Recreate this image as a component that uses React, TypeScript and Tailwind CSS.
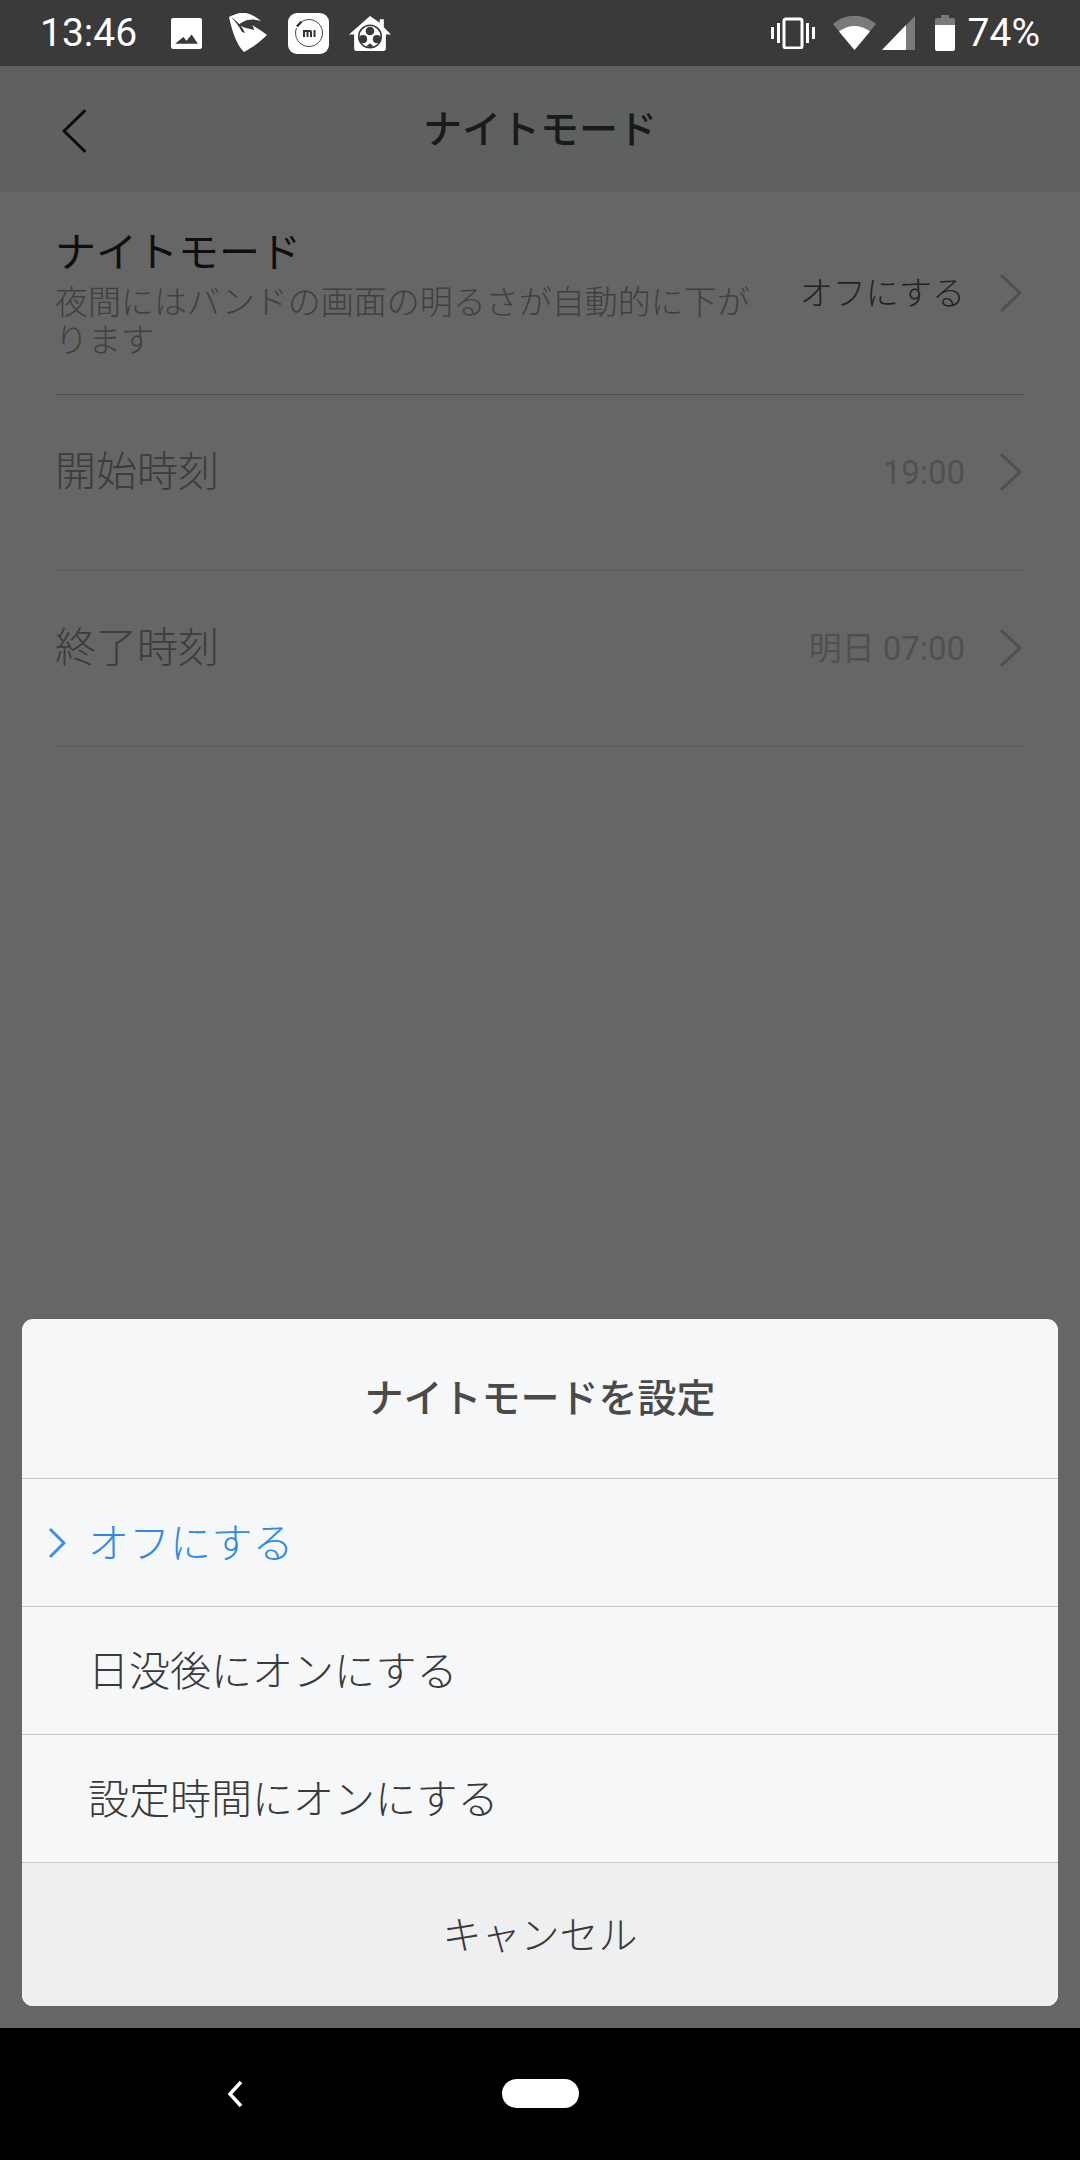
import React from "react";

const jp = "font-['Roboto','Noto_Sans_CJK_JP',sans-serif]";

function Chevron({ className }: { className: string }) {
  return (
    <svg width="22" height="38" viewBox="0 0 22 38" fill="none" className={className}>
      <path d="M2 2 L20 19 L2 36" stroke="currentColor" strokeWidth="3" strokeLinecap="round" strokeLinejoin="round" />
    </svg>
  );
}

function StatusIcons() {
  return (
    <div className="flex items-center">
      <svg width="31" height="31" viewBox="0 0 30 30" className="ml-[34px]">
        <path fillRule="evenodd" fill="#fff" d="M2 0h26a2 2 0 0 1 2 2v26a2 2 0 0 1-2 2H2a2 2 0 0 1-2-2V2a2 2 0 0 1 2-2ZM4 25h22l-6-9-5 6-3-3.500Z" />
      </svg>
      <svg width="38" height="40" viewBox="0 0 38 40" className="ml-[27px]">
        <path fill="#fff" d="M0 4C8 0 14-1 17 0 23 1 28 5 32 8 26 6 19 6 14 9 12 10 10 11 9 12 14 14 20 16 25 17 25 15 24 13 23 12 28 15 33 18 38 22 31 29 24 34 15 39 8 33 3 18 0 4Z" />
        <path fill="#3a3a3a" d="M2 4C6 8 10 13 13 19L16 20C13 13 8 8 2 4Z" />
      </svg>
      <div className="ml-[21px] flex h-[41px] w-[41px] items-center justify-center rounded-[9px] bg-white">
        <svg width="30" height="30" viewBox="0 0 30 30">
          <path d="M8 3.500A13.500 13.500 0 1 1 2.500 10" fill="none" stroke="#333" strokeWidth="0.900" />
          <path d="M3 8.500 L7.500 3.500" stroke="#333" strokeWidth="2.500" />
          <path d="M9 12h7a2 2 0 0 1 2 2v5h-2v-5h-1.500v5h-2v-5H11v5H9ZM19.500 12h2v7h-2Z" fill="#333" />
        </svg>
      </div>
      <svg width="42" height="35" viewBox="0 0 41 34" className="ml-[20px]">
        <path fill="#fff" d="M20.500 0 30 6.500V3h4v8l7 7h-5v14a2 2 0 0 1-2 2H7a2 2 0 0 1-2-2V18H0Z" />
        <circle cx="20.500" cy="20" r="11" fill="none" stroke="#3a3a3a" strokeWidth="1.500" />
        <circle cx="20.500" cy="14.500" r="4.200" fill="#3a3a3a" />
        <circle cx="13.700" cy="22.500" r="4" fill="#3a3a3a" />
        <circle cx="27.300" cy="22.500" r="4" fill="#3a3a3a" />
        <path d="M17 29.500a9 9 0 0 0 7 0l-3.500-3Z" fill="#3a3a3a" />
      </svg>
    </div>
  );
}

function StatusRight() {
  return (
    <div className="flex items-center">
      <svg width="44" height="32" viewBox="0 0 44 32" fill="none">
        <rect x="13" y="2" width="18" height="29" rx="2" stroke="#fff" strokeWidth="3" />
        <path d="M1.500 10v12M7.500 6v20M36.500 6v20M42.500 10v12" stroke="#fff" strokeWidth="3" />
      </svg>
      <svg width="43" height="34" viewBox="0 0 43 34" className="ml-[18px]">
        <path fill="#7a7a7a" d="M0 8C12-3 31-3 43 8L21.500 34Z" />
        <path fill="#fff" d="M6 15.500C15 8 28 8 37 15.500L21.500 34Z" />
      </svg>
      <svg width="33" height="34" viewBox="0 0 33 34" className="ml-[6px]">
        <path fill="#7a7a7a" d="M33 0V34H0Z" />
        <path fill="#fff" d="M24 9V34H0Z" />
      </svg>
      <svg width="20" height="36" viewBox="0 0 20 36" className="ml-[20px]">
        <path fill="#7a7a7a" d="M6 0h8v3h4a2 2 0 0 1 2 2v7H0V5a2 2 0 0 1 2-2h4Z" />
        <path fill="#fff" d="M0 10h20v24a2 2 0 0 1-2 2H2a2 2 0 0 1-2-2Z" />
      </svg>
      <span className="ml-[13px] font-['Roboto',sans-serif] text-[39px] leading-none text-white">74%</span>
    </div>
  );
}

function Row({ title, value }: { title: string; value: string }) {
  return (
    <div className="flex h-[176px] items-center justify-between border-b border-[#5c5c5c] pb-[21px]">
      <span className="ml-[-1px] text-[41px] font-light leading-none text-[#3c3c3c]">{title}</span>
      <div className="flex items-center">
        <span className="text-[33px] leading-none text-[#505050]">{value}</span>
        <Chevron className="ml-[35px] mr-[2px] text-[#505050]" />
      </div>
    </div>
  );
}

function SheetRow({ text, active }: { text: string; active?: boolean }) {
  return (
    <div className="flex h-[128px] items-center border-b border-[#c6c7c9] pl-[26px] pt-[3px]">
      <span className="flex w-[40px]">
        {active && (
          <svg width="18" height="32" viewBox="0 0 18 32" fill="none" className="mt-[-3px] text-[#3d92e3]">
            <path d="M2 2 L16 16 L2 30" stroke="currentColor" strokeWidth="3" />
          </svg>
        )}
      </span>
      <span className={`text-[41px] font-light leading-none ${active ? "text-[#2f8ae2]" : "text-[#393939]"}`}>{text}</span>
    </div>
  );
}

export default function App() {
  return (
    <div className={`flex h-[2160px] w-[1080px] flex-col overflow-hidden bg-black ${jp}`}>
      <div className="flex h-[66px] shrink-0 items-center justify-between bg-[#3a3a3a] pl-[40px] pr-[40px]">
        <div className="flex items-center">
          <span className="font-['Roboto',sans-serif] text-[39px] leading-none text-white">13:46</span>
          <StatusIcons />
        </div>
        <StatusRight />
      </div>

      <div className="relative flex-1 bg-[#666666]">
        <div className="relative flex h-[126px] items-center justify-center bg-[#5f6160] pt-[2px]">
          <svg width="24" height="44" viewBox="0 0 24 44" fill="none" className="absolute left-[62px] top-[43px]">
            <path d="M22.500 2 L2 22 L22.500 42" stroke="#0c0c0c" strokeWidth="3" strokeLinecap="round" strokeLinejoin="round" />
          </svg>
          <span className="text-[39px] font-medium leading-none text-[#1a1a1a]">ナイトモード</span>
        </div>

        <div className="px-[56px]">
          <div className="flex h-[203px] items-start justify-between border-b border-[#4e4e4e] pt-[37px]">
            <div className="ml-[-1px] w-[701px]">
              <div className="text-[41px] leading-[48px] text-[#0f0f0f]">ナイトモード</div>
              <div className="mt-[7px] text-[33px] font-light leading-[38px] text-[#404040]">
                夜間にはバンドの画面の明るさが自動的に下がります
              </div>
            </div>
            <div className="mt-[45px] flex items-center">
              <span className="text-[33px] font-light leading-none text-[#222222]">オフにする</span>
              <Chevron className="ml-[35px] mr-[2px] text-[#505050]" />
            </div>
          </div>
          <Row title="開始時刻" value="19:00" />
          <Row title="終了時刻" value="明日 07:00" />
        </div>

        <div className="absolute bottom-[22px] left-[22px] right-[22px] overflow-hidden rounded-[11px] bg-[#f6f7f9]">
          <div className="flex h-[160px] items-center justify-center border-b border-[#c6c7c9] pt-[2px]">
            <span className="text-[39px] font-medium leading-none text-[#4a4a4a]">ナイトモードを設定</span>
          </div>
          <SheetRow text="オフにする" active />
          <SheetRow text="日没後にオンにする" />
          <SheetRow text="設定時間にオンにする" />
          <div className="flex h-[143px] items-center justify-center bg-[#eeeff1] pt-[4px]">
            <span className="text-[39px] font-light leading-none text-[#393939]">キャンセル</span>
          </div>
        </div>
      </div>

      <div className="relative flex h-[132px] shrink-0 items-center justify-center bg-black">
        <svg width="16" height="28" viewBox="0 0 16 28" fill="none" className="absolute left-[227px] top-[52px]">
          <path d="M14 2 L3 14 L14 26" stroke="#fff" strokeWidth="3.500" />
        </svg>
        <div className="mt-[-1px] h-[29px] w-[77px] rounded-full bg-white" />
      </div>
    </div>
  );
}
